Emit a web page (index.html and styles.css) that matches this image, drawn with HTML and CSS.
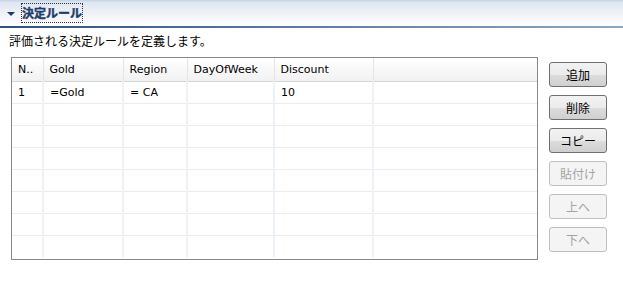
FILE: index.html
```html
<!DOCTYPE html>
<html lang="ja">
<head>
  <meta charset="UTF-8">
  <title>決定ルール</title>
  <link rel="stylesheet" href="styles.css">
</head>
<body>

<div class="encabezado">
  <span class="flecha"></span>
  <span class="titulo">決定ルール</span>
</div>

<div class="descripcion">評価される決定ルールを定義します。</div>

<div class="cuerpo">
  <div class="tabla-caja">
    <table class="tabla">
      <colgroup>
        <col style="width:31px">
        <col style="width:80px">
        <col style="width:64px">
        <col style="width:87px">
        <col style="width:99px">
        <col>
      </colgroup>
      <thead>
        <tr><th>N..</th><th>Gold</th><th>Region</th><th>DayOfWeek</th><th>Discount</th><th></th></tr>
      </thead>
      <tbody>
        <tr><td>1</td><td>=Gold</td><td>= CA</td><td></td><td>10</td><td></td></tr>
        <tr><td></td><td></td><td></td><td></td><td></td><td></td></tr>
        <tr><td></td><td></td><td></td><td></td><td></td><td></td></tr>
        <tr><td></td><td></td><td></td><td></td><td></td><td></td></tr>
        <tr><td></td><td></td><td></td><td></td><td></td><td></td></tr>
        <tr><td></td><td></td><td></td><td></td><td></td><td></td></tr>
        <tr><td></td><td></td><td></td><td></td><td></td><td></td></tr>
        <tr class="ultima"><td></td><td></td><td></td><td></td><td></td><td></td></tr>
      </tbody>
    </table>
  </div>

  <div class="botones">
    <button>追加</button>
    <button>削除</button>
    <button>コピー</button>
    <button disabled>貼付け</button>
    <button disabled>上へ</button>
    <button disabled>下へ</button>
  </div>
</div>

</body>
</html>
```

FILE: styles.css
```css
body {
  margin: 0;
  background: white;
  font-family: "DejaVu Sans", "Noto Sans CJK JP", sans-serif;
  font-size: 11px;
  color: #000;
}
.encabezado {
  height: 26px;
  border-bottom: 2px solid #7f9dc0;
  border-image: linear-gradient(to right, #2d5282, #8ca8c8) 1;
  background: linear-gradient(to bottom, #c6d7ea 0, #c6d7ea 1px, #dfe6f0 2px, #ffffff 100%);
  display: flex;
  align-items: center;
  padding-left: 7px;
}
.flecha {
  width: 0;
  height: 0;
  border-left: 4px solid transparent;
  border-right: 4px solid transparent;
  border-top: 4px solid #1f3b6b;
  margin-right: 6px;
  margin-top: 1px;
}
.titulo {
  font-family: "Noto Sans CJK JP", sans-serif;
  font-weight: bold;
  font-size: 12px;
  color: #1f3b6b;
  -webkit-text-stroke: 0.4px #1f3b6b;
  border: 1px dotted #333;
  padding: 1px 0 2px 0;
  line-height: 15px;
}
.descripcion {
  font-family: "Noto Sans CJK JP", sans-serif;
  font-size: 12px;
  padding: 6px 0 0 9px;
  height: 23px;
  line-height: 14px;
}
.cuerpo {
  display: flex;
  padding-left: 11px;
}
.tabla-caja {
  width: 525px;
  height: 201px;
  border: 1px solid #848a92;
  overflow: hidden;
}
.tabla {
  width: 100%;
  border-collapse: collapse;
  table-layout: fixed;
}
.tabla th {
  height: 23px;
  font-weight: normal;
  text-align: left;
  padding: 0 0 0 6px;
  background: linear-gradient(to bottom, #ffffff, #f1f1f1);
  border-bottom: 1px solid #d5d5d5;
  border-right: 1px solid #e4e4e4;
  white-space: nowrap;
  overflow: hidden;
}
.tabla th:last-child {
  border-right: none;
}
.tabla td {
  height: 21px;
  padding: 0 0 0 6px;
  border-bottom: 1px solid #ececec;
  border-right: 2px solid #edf1f8;
  white-space: nowrap;
}
.tabla td:last-child {
  border-right: none;
}
.tabla .ultima td {
  border-bottom: none;
}
.botones {
  display: flex;
  flex-direction: column;
  gap: 8px;
  margin-left: 11px;
  margin-top: 5px;
}
.botones button {
  width: 58px;
  height: 25px;
  padding: 0;
  font-family: "Noto Sans CJK JP", sans-serif;
  font-size: 12px;
  color: #000;
  border: 1px solid #707070;
  border-radius: 3px;
  background: linear-gradient(to bottom, #f2f2f2 0%, #ebebeb 50%, #dddddd 51%, #cfcfcf 100%);
}
.botones button:disabled {
  color: #a3a3a3;
  border-color: #bfbfbf;
  background: #f4f4f4;
}
```
